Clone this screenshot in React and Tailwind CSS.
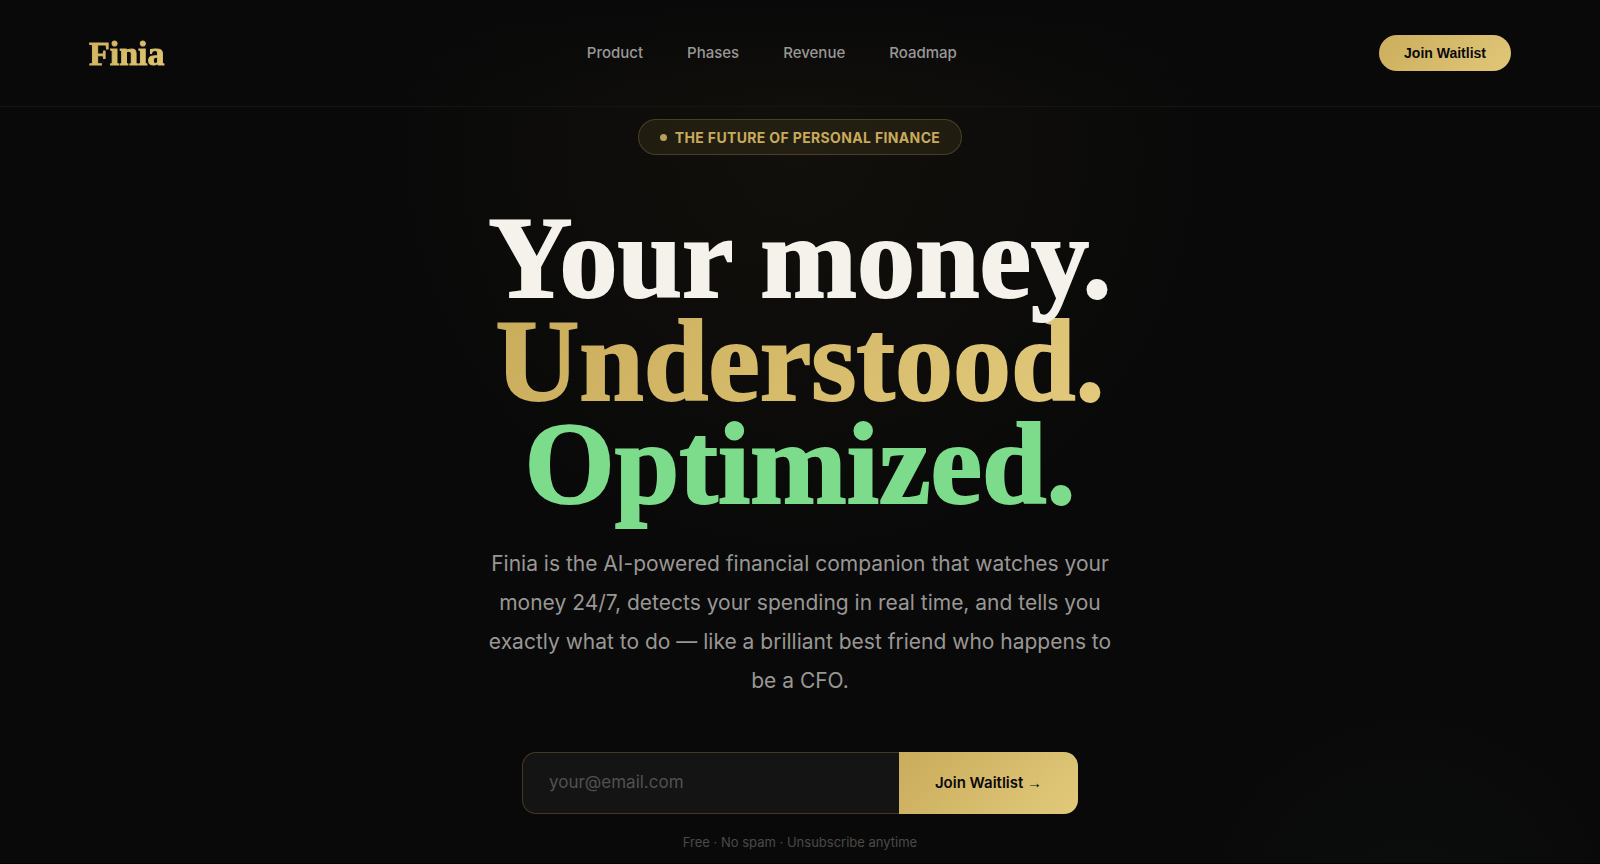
import React, { useState } from 'react';

const links = ['Product', 'Phases', 'Revenue', 'Roadmap'];

export default function App() {
  const [email, setEmail] = useState('');

  return (
    <div className="min-h-screen overflow-hidden border-b border-black bg-[#090909] bg-[radial-gradient(ellipse_420px_420px_at_50%_150px,rgba(201,168,76,0.045),transparent),radial-gradient(circle_220px_at_88%_920px,rgba(80,220,140,0.025),transparent)] font-['Inter',sans-serif] text-[#f5f2ec]">
      {/* NAV */}
      <header className="flex h-[107px] items-center justify-between border-b border-white/5 bg-linear-to-b from-[#090909] to-transparent px-[89px]">
        <a href="#top" className="bg-linear-135 from-[#cfb15c] to-[#e0c774] bg-clip-text font-['Liberation_Serif',serif] text-[34px] font-bold text-transparent [-webkit-text-stroke:1px_transparent]">
          Finia
        </a>
        <nav className="flex gap-11">
          {links.map(link => (
            <a key={link} href={`#${link.toLowerCase()}`} className="text-[15px] font-medium text-[#9a9895]">
              {link}
            </a>
          ))}
        </nav>
        <button className="h-9 rounded-full bg-linear-135 from-[#cbae5e] to-[#e0c777] px-[25px] font-['Liberation_Sans',sans-serif] text-[14px] font-bold text-[#0a0a0a]">
          Join Waitlist
        </button>
      </header>

      {/* HERO */}
      <main id="top" className="flex flex-col items-center pt-3 text-center">
        <div className="flex h-9 items-center gap-2 rounded-full border border-[#c9a84c]/25 bg-[#c9a84c]/10 px-[21px]">
          <span className="size-[7px] rounded-full bg-[#b9a05a]" />
          <span className="text-[14px] font-bold tracking-wide text-[#c9aa5b] uppercase">The future of personal finance</span>
        </div>

        <h1 className="mt-13 font-['Liberation_Serif',serif] text-[116px] leading-[103px] font-bold">
          <span className="block [-webkit-text-stroke:2px_#f5f2ec]">Your money.</span>
          <span className="mx-auto block w-fit bg-linear-135 from-[#c9ac5a] to-[#e3ca7c] bg-clip-text text-transparent [-webkit-text-stroke:2px_transparent]">Understood.</span>
          <span className="block text-[#7ddc8b] [-webkit-text-stroke:2px_#7ddc8b]">Optimized.</span>
        </h1>

        <p className="mt-7 max-w-[640px] text-[21px] leading-[39px] text-[#999793]">
          Finia is the AI-powered financial companion that watches your money 24/7, detects your spending in real time, and tells you exactly what to do — like a brilliant best friend who happens to be a CFO.
        </p>

        <form onSubmit={e => e.preventDefault()} className="mt-13 flex h-[62px] w-full max-w-[556px]">
          <input
            type="email"
            aria-label="Email address"
            value={email}
            onChange={e => setEmail(e.target.value)}
            placeholder="your@email.com"
            className="min-w-0 flex-1 rounded-l-[14px] border border-r-0 border-[#c9a84c]/25 bg-[#141414] px-[26px] text-[17px] outline-none placeholder:text-[#515151]"
          />
          <button className="w-[179px] rounded-r-[14px] bg-linear-135 from-[#c9ac5c] to-[#e2c97a] text-[15px] font-semibold text-[#0a0a0a]">
            Join Waitlist <span className="font-['Liberation_Sans',sans-serif]">→</span>
          </button>
        </form>
        <p className="mt-4 text-[13px] leading-6 text-[#4b4a48]">Free · No spam · Unsubscribe anytime</p>
      </main>
    </div>
  );
}
